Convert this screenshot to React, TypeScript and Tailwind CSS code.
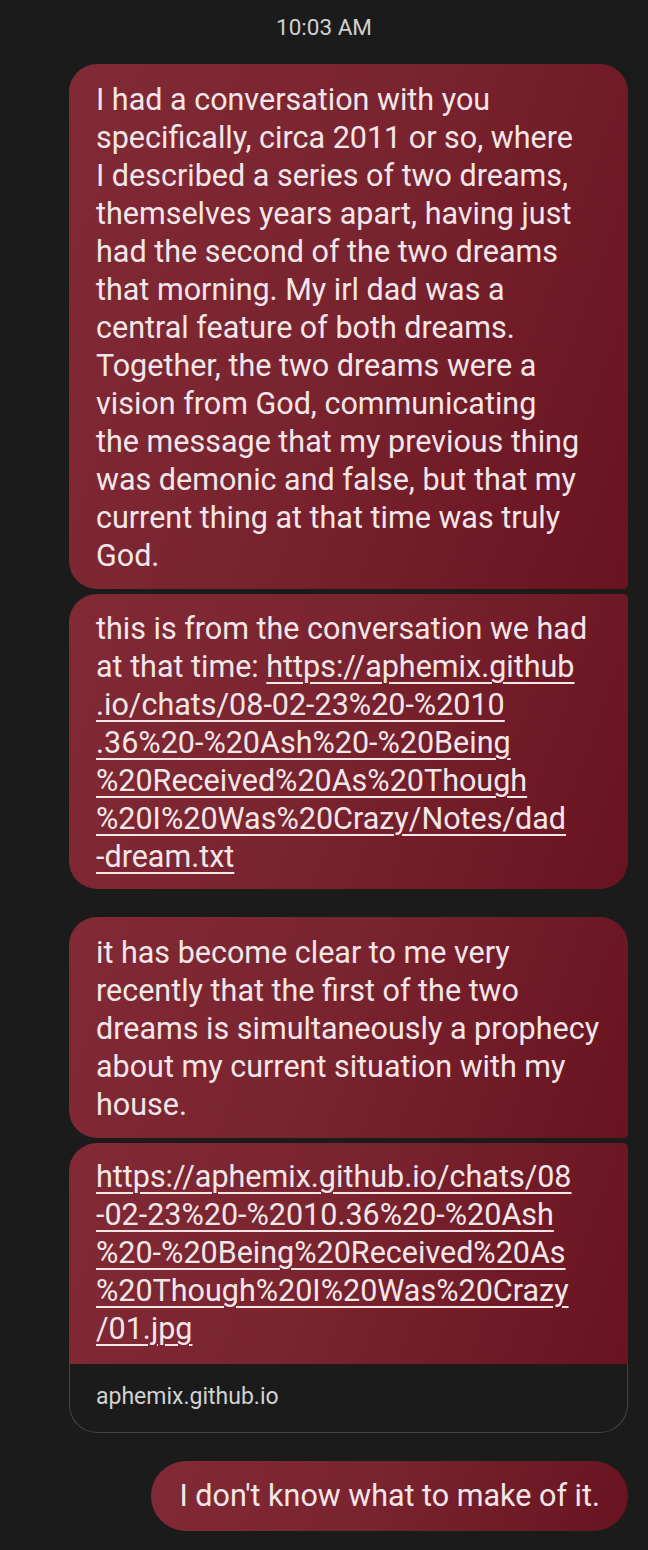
import React from 'react';

const font = { fontFamily: 'Roboto, "Noto Sans", sans-serif' };

const bubbleBg = 'bg-[linear-gradient(110deg,#812a35_0%,#7a2430_45%,#6a1320_100%)]';

type Line = { text: string; link?: string };

const Lines: React.FC<{ lines: (string | Line[])[] }> = ({ lines }) => (
  <>
    {lines.map((line, i) => (
      <span key={i} className="block whitespace-nowrap">
        {typeof line === 'string'
          ? line
          : line.map((part, j) =>
              part.link ? (
                <span key={j} className="underline decoration-2 underline-offset-[5px]">
                  {part.text}
                </span>
              ) : (
                <span key={j}>{part.text}</span>
              )
            )}
      </span>
    ))}
  </>
);

const App: React.FC = () => {
  return (
    <div className="min-h-[1550px] w-[648px] bg-[#1b1b1b] text-[#f3e6e8]" style={font}>
      {/* timestamp */}
      <div className="pt-[13px] text-center text-[22.5px] leading-[28px] text-[#d0d0d0]">10:03 AM</div>

      <div className="flex flex-col items-end pr-[20px] pt-[23px]">
        {/* first bubble */}
        <div className={`w-[559px] ${bubbleBg} rounded-[28px] rounded-br-[5px] px-[27px] pt-[17px] pb-[14px] text-[30.5px] leading-[38px]`}>
          <Lines
            lines={[
              'I had a conversation with you',
              'specifically, circa 2011 or so, where',
              'I described a series of two dreams,',
              'themselves years apart, having just',
              'had the second of the two dreams',
              'that morning. My irl dad was a',
              'central feature of both dreams.',
              'Together, the two dreams were a',
              'vision from God, communicating',
              'the message that my previous thing',
              'was demonic and false, but that my',
              'current thing at that time was truly',
              'God.',
            ]}
          />
        </div>

        {/* second bubble */}
        <div className={`mt-[5px] w-[559px] ${bubbleBg} rounded-[28px] rounded-tr-[5px] px-[27px] pt-[16px] pb-[13px] text-[30.5px] leading-[38px]`}>
          <Lines
            lines={[
              'this is from the conversation we had',
              [{ text: 'at that time: ' }, { text: 'https://aphemix.github', link: 'y' }],
              [{ text: '.io/chats/08-02-23%20-%2010', link: 'y' }],
              [{ text: '.36%20-%20Ash%20-%20Being', link: 'y' }],
              [{ text: '%20Received%20As%20Though', link: 'y' }],
              [{ text: '%20I%20Was%20Crazy/Notes/dad', link: 'y' }],
              [{ text: '-dream.txt', link: 'y' }],
            ]}
          />
        </div>

        {/* third bubble */}
        <div className={`mt-[28px] w-[559px] ${bubbleBg} rounded-[28px] rounded-br-[5px] px-[27px] pt-[17px] pb-[14px] text-[30.5px] leading-[38px]`}>
          <Lines
            lines={[
              'it has become clear to me very',
              'recently that the first of the two',
              'dreams is simultaneously a prophecy',
              'about my current situation with my',
              'house.',
            ]}
          />
        </div>

        {/* link bubble with preview */}
        <div className="mt-[5px] w-[559px]">
          <div className={`${bubbleBg} rounded-t-[28px] rounded-tr-[5px] px-[27px] pt-[15px] pb-[16px] text-[30.5px] leading-[38px]`}>
            <Lines
              lines={[
                [{ text: 'https://aphemix.github.io/chats/08', link: 'y' }],
                [{ text: '-02-23%20-%2010.36%20-%20Ash', link: 'y' }],
                [{ text: '%20-%20Being%20Received%20As', link: 'y' }],
                [{ text: '%20Though%20I%20Was%20Crazy', link: 'y' }],
                [{ text: '/01.jpg', link: 'y' }],
              ]}
            />
          </div>
          <div className="h-[69px] rounded-b-[28px] border-[1.5px] border-t-0 border-[#434343] px-[26px] pt-[19px] text-[23px] leading-[28px] text-[#d2d2d2]">
            aphemix.github.io
          </div>
        </div>

        {/* last bubble */}
        <div className={`mt-[28px] h-[70px] ${bubbleBg} rounded-full px-[28px] flex items-center text-[30.5px] leading-[38px]`}>
          I don't know what to make of it.
        </div>
      </div>
    </div>
  );
};

export default App;
